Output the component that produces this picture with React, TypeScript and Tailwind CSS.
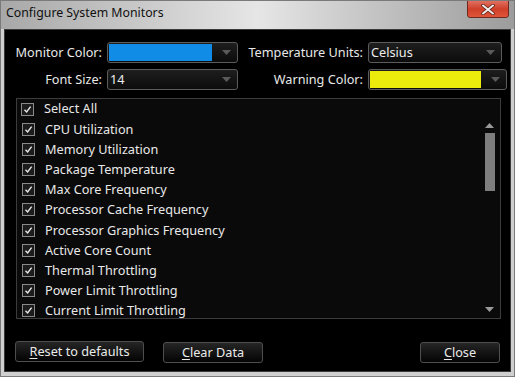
import React from 'react';

const font = { fontFamily: '"Noto Sans", "Open Sans", Arial, sans-serif' };

const items = [
  'CPU Utilization',
  'Memory Utilization',
  'Package Temperature',
  'Max Core Frequency',
  'Processor Cache Frequency',
  'Processor Graphics Frequency',
  'Active Core Count',
  'Thermal Throttling',
  'Power Limit Throttling',
  'Current Limit Throttling',
];

const Check = () => (
  <span className="w-[13px] h-[13px] border border-[#8a8a8a] bg-[#1c1c1c] flex items-center justify-center shrink-0">
    <svg width="9" height="9" viewBox="0 0 9 9">
      <path d="M1.5 4.8 L3.6 7 L7.6 1.6" fill="none" stroke="#e8e8e8" strokeWidth="1.4" />
    </svg>
  </span>
);

const Arrow = () => (
  <svg width="9" height="5" viewBox="0 0 9 5" className="shrink-0">
    <path d="M0 0 L9 0 L4.5 5 Z" fill="#5a5a5a" />
  </svg>
);

const Dropdown = ({ w, swatch, text }: { w: string; swatch?: string; text?: string }) => (
  <div className={`${w} h-[21px] rounded-[3px] border border-[#5c5c5c] bg-gradient-to-b from-[#1e1e1e] to-[#0c0c0c] flex items-center pl-[1px] pr-[6px]`}>
    {swatch ? (
      <div className={`flex-1 h-[17px] mr-[10px] ${swatch}`} />
    ) : (
      <span className="flex-1 text-[12.7px] text-[#ececec] pl-[1px] leading-none">{text}</span>
    )}
    <Arrow />
  </div>
);

const Btn = ({ w, first, rest }: { w: string; first: string; rest: string }) => (
  <button className={`${w} h-[21px] rounded-[3px] border border-[#4e4e4e] bg-gradient-to-b from-[#262626] to-[#050505] text-[12.7px] text-[#eaeaea] leading-none`}>
    <span className="underline underline-offset-2">{first}</span>
    {rest}
  </button>
);

export default function App() {
  return (
    <div style={font} className="w-[515px] h-[377px] flex flex-col bg-[#cfcfcf] border border-[#7a7a7a] overflow-hidden">
      {/* title bar */}
      <div className="h-[28px] flex items-start bg-gradient-to-r from-[#a8a8a8] via-[#e6e6e6] to-[#9c9c9c] relative">
        <span className="text-[12.3px] text-[#101010] pl-[5px] pt-[3px]">Configure System Monitors</span>
        <div className="absolute left-[466px] top-[-1px] w-[42px] h-[18px] border border-[#6a2a20] rounded-b-[3px] bg-gradient-to-b from-[#e07060] via-[#cf3f28] to-[#e0553a] flex items-center justify-center">
          <svg width="14" height="11" viewBox="0 0 14 11">
            <path d="M2 1.5 L12 9.5 M12 1.5 L2 9.5" stroke="#5a1a10" strokeWidth="3.4" strokeLinecap="round" />
            <path d="M2 1.5 L12 9.5 M12 1.5 L2 9.5" stroke="#eeeeee" strokeWidth="2" strokeLinecap="round" />
          </svg>
        </div>
      </div>

      {/* client area */}
      <div className="flex-1 mx-[3px] mb-[4px] bg-black border border-[#3a3a3a] flex flex-col text-[#e8e8e8]">
        <div className="pt-[12px] flex flex-col gap-[6px]">
          <div className="flex items-center">
            <span className="w-[98px] text-right text-[12.7px] pr-[1px]">Monitor Color:</span>
            <div className="ml-[4px]"><Dropdown w="w-[131px]" swatch="bg-[#118ce6]" /></div>
            <span className="w-[126px] text-right text-[12.7px] pr-[1px]">Temperature Units:</span>
            <div className="ml-[4px]"><Dropdown w="w-[134px]" text="Celsius" /></div>
          </div>
          <div className="flex items-center">
            <span className="w-[98px] text-right text-[12.7px] pr-[1px]">Font Size:</span>
            <div className="ml-[4px]"><Dropdown w="w-[131px]" text="14" /></div>
            <span className="w-[126px] text-right text-[12.7px] pr-[1px]">Warning Color:</span>
            <div className="ml-[4px]"><Dropdown w="w-[139px]" swatch="bg-[#ecec0c]" /></div>
          </div>
        </div>

        {/* list */}
        <div className="mt-[8px] ml-[11px] w-[485px] h-[221px] border border-[#3c3c3c] bg-[#0a0a0a] flex flex-col overflow-hidden">
          <div className="h-[20px] flex items-center gap-[10px] pl-[4px] text-[12.7px] shrink-0">
            <Check />
            <span>Select All</span>
          </div>
          <div className="flex flex-1 min-h-0">
            <div className="flex-1 flex flex-col overflow-hidden">
              {items.map((t) => (
                <div key={t} className="h-[20.2px] shrink-0 flex items-center gap-[10px] pl-[5px] text-[12.7px]">
                  <Check />
                  <span>{t}</span>
                </div>
              ))}
            </div>
            <div className="w-[17px] flex flex-col items-center pt-[4px] pb-[6px] mr-[2px]">
              <svg width="9" height="5" viewBox="0 0 9 5"><path d="M0 5 L9 5 L4.5 0 Z" fill="#9a9a9a" /></svg>
              <div className="w-[10px] h-[58px] mt-[5px] bg-[#7e7e7e]" />
              <div className="flex-1" />
              <svg width="9" height="5" viewBox="0 0 9 5"><path d="M0 0 L9 0 L4.5 5 Z" fill="#9a9a9a" /></svg>
            </div>
          </div>
        </div>

        {/* buttons */}
        <div className="mt-[20px] flex items-center pl-[10px]">
          <Btn w="w-[129px]" first="R" rest="eset to defaults" />
          <div className="ml-[19px]"><Btn w="w-[100px]" first="C" rest="lear Data" /></div>
          <div className="ml-auto mr-[10px]"><Btn w="w-[80px]" first="C" rest="lose" /></div>
        </div>
      </div>
    </div>
  );
}
